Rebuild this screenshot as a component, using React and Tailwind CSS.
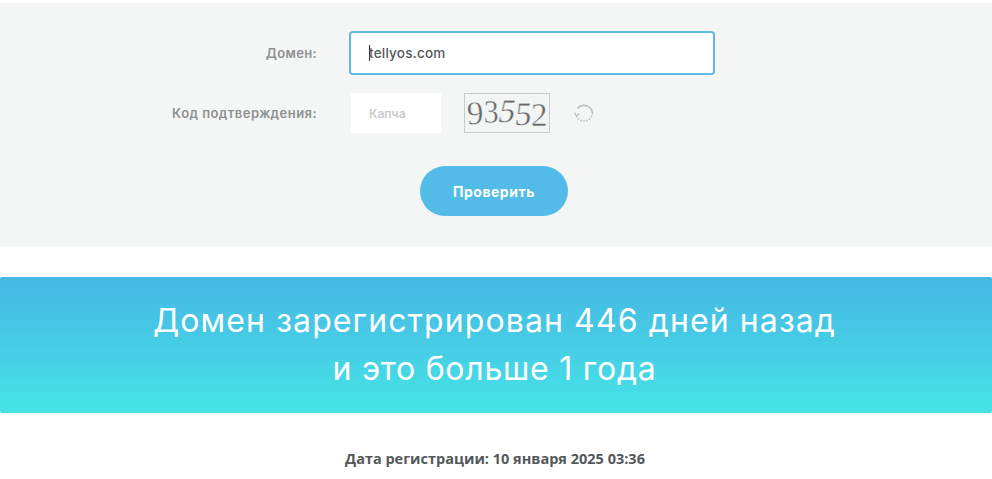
import React from 'react';

const App = () => {
  return (
    <div className="h-[479px] overflow-hidden bg-white pt-[3px] font-['Inter','Noto_Sans',sans-serif]">
      {/* Check form */}
      <div className="h-[244px] bg-[#f4f6f6] pt-[27px]">
        <div className="flex h-[46px] items-center">
          <label className="w-[317px] pt-px text-right text-[13px] font-semibold tracking-[0.35px] text-[#8e9192]">Домен:</label>
          <div className="ml-[32px] flex h-[44px] w-[366px] items-center rounded-[4px] border-2 border-[#5fbcdf] bg-white pl-[18px] text-[13.5px] font-medium tracking-[0.2px] text-[#55585a]">
            <span className="h-[16px] w-px bg-[#333]"></span>
            <span className="-ml-px">tellyos.com</span>
          </div>
        </div>

        <div className="mt-[17px] flex h-[40px] items-center">
          <label className="w-[317px] pt-px text-right text-[13px] font-semibold tracking-[0.45px] text-[#8e9192]">Код подтверждения:</label>
          <div className="ml-[34px] flex h-[40px] w-[90px] items-center bg-white pt-px pl-[18px] text-[12px] font-semibold text-[#c9cbcc]">Капча</div>
          <div className="ml-[23px] flex h-[40px] w-[86px] items-center justify-center overflow-hidden border border-[#c9cccc] bg-[#f3f4f4] font-['Liberation_Serif',serif] text-[33px] leading-none tracking-[-0.5px] text-[#66686a] [-webkit-text-stroke:0.4px_#f3f4f4]">
            <span className="inline-block -rotate-3">9</span>
            <span className="inline-block -translate-y-px scale-x-90">3</span>
            <span className="inline-block -translate-y-[2px] -skew-x-12">5</span>
            <span className="inline-block translate-y-px -skew-x-6">5</span>
            <span className="inline-block translate-y-[2px]">2</span>
          </div>
          <svg className="ml-[23px]" width="22" height="22" viewBox="0 0 22 22" fill="none" stroke="#bcc0c1" strokeWidth="1.6">
            <path d="M4.5 6.5A8.5 8.5 0 0 1 19.5 11" />
            <path d="M19.5 11A8.5 8.5 0 0 1 3 13.5" strokeDasharray="1.5 1.5" />
            <path d="M1.5 10.5l2 3.5 3-2.5" strokeWidth="1.3" />
          </svg>
        </div>

        <div className="mt-[33px] flex justify-center">
          <button className="mr-[4px] h-[50px] w-[148px] rounded-[25px] bg-[#52bbe8] text-[14px] font-bold tracking-[0.5px] text-white">Проверить</button>
        </div>
      </div>

      {/* Result banner */}
      <div className="mt-[30px] flex h-[136px] flex-col items-center justify-center rounded-[2px] bg-gradient-to-b from-[#46b7e4] to-[#46e3e6] pr-[3px] text-center text-[32px] leading-[48px] font-normal text-white">
        <p className="tracking-[1.1px]">Домен зарегистрирован 446 дней назад</p>
        <p className="tracking-[0.75px]">и это больше 1 года</p>
      </div>

      <p className="mt-[36px] pr-[2px] text-center font-['Open_Sans',sans-serif] text-[14.5px] leading-[20px] font-bold text-[#55585a]">
        Дата регистрации: 10 января 2025 03:36
      </p>
    </div>
  );
};

export default App;
